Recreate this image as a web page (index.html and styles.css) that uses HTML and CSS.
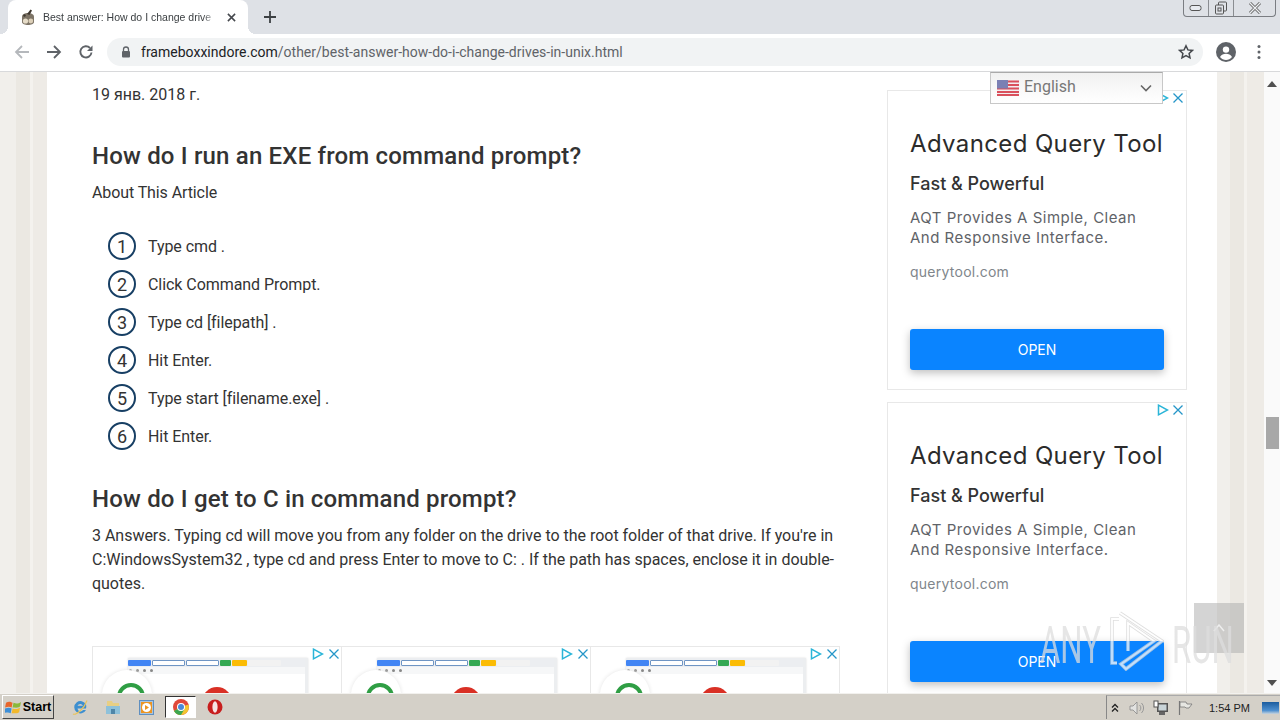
FILE: index.html
```html
<!DOCTYPE html>
<html lang="en">
<head>
<meta charset="utf-8">
<title>Best answer: How do I change drives in Unix?</title>
<link rel="stylesheet" href="styles.css">
</head>
<body>
<div class="screen">
  <header class="chrome">
    <div class="tabstrip">
      <div class="tab">
        <svg class="favicon" viewBox="0 0 14 16"><path d="M1 8c0-3 3-4 6-4s6 1 6 4v5c0 2-3 3-6 3s-6-1-6-3z" fill="#7d7466"/><circle cx="4.500" cy="12" r="2.600" fill="#e6dcc8"/><circle cx="9.800" cy="12" r="2.400" fill="#dccfb8"/><path d="M6 5 9.500.5l1.500 1L8.500 6z" fill="#3f3830"/><circle cx="3.500" cy="6.500" r="1.200" fill="#3f3830"/></svg>
        <span class="tab-title">Best answer: How do I change drive</span>
        <svg class="tab-close" viewBox="0 0 10 10"><path d="M1 1l8 8M9 1l-8 8" stroke="#45484d" stroke-width="1.700"/></svg>
      </div>
      <svg class="new-tab" viewBox="0 0 12 12"><path d="M6 0v12M0 6h12" stroke="#3c4043" stroke-width="1.800"/></svg>
      <div class="win-controls">
        <span class="win-btn win-min"><svg viewBox="0 0 14 8" width="14" height="8"><rect x="1" y="1.500" width="11" height="5" rx="2" fill="#e8ebf0" stroke="#555"/></svg></span>
        <span class="win-btn win-max"><svg viewBox="0 0 14 14" width="14" height="14"><rect x="4.500" y="1" width="8" height="9" rx="1" fill="#dee1e6" stroke="#555"/><rect x="1.500" y="4" width="8" height="9" rx="1" fill="#dee1e6" stroke="#555"/><rect x="4" y="7" width="3" height="3" fill="none" stroke="#555"/></svg></span>
        <span class="win-btn win-close"><svg viewBox="0 0 14 12" width="14" height="12"><path d="M2 1l10 10M12 1 2 11" stroke="#666" stroke-width="3"/><path d="M2 1l10 10M12 1 2 11" stroke="#eef0f3" stroke-width="1.200"/></svg></span>
      </div>
    </div>
    <div class="toolbar">
      <svg class="nav-icon" viewBox="0 0 16 16"><path d="M15 8H2M8 2 2 8l6 6" fill="none" stroke="#b5b8bc" stroke-width="1.800"/></svg>
      <svg class="nav-icon" viewBox="0 0 16 16"><path d="M1 8h13M8 2l6 6-6 6" fill="none" stroke="#5f6368" stroke-width="1.800"/></svg>
      <svg class="nav-icon" viewBox="0 0 16 16"><path d="M13.500 8.500A5.600 5.600 0 1 1 12 4" fill="none" stroke="#5f6368" stroke-width="1.900"/><path d="M14.500 1.500v5.500H9z" fill="#5f6368"/></svg>
      <div class="omnibox">
        <svg class="lock" viewBox="0 0 10 12"><path d="M2.500 5V3.500a2.500 2.500 0 0 1 5 0V5" fill="none" stroke="#5f6368" stroke-width="1.300"/><rect x="1" y="5" width="8" height="6.500" rx="1" fill="#5f6368"/></svg>
        <span class="url"><span class="url-host">frameboxxindore.com</span>/other/best-answer-how-do-i-change-drives-in-unix.html</span>
        <svg class="star" viewBox="0 0 16 16"><path d="M8 1.800l1.900 4.100 4.500.5-3.300 3 .9 4.400L8 11.600l-4 2.200.9-4.400-3.300-3 4.500-.5z" fill="none" stroke="#45484d" stroke-width="1.500"/></svg>
      </div>
      <svg class="avatar" viewBox="0 0 20 20"><circle cx="10" cy="10" r="10" fill="#5f6368"/><circle cx="10" cy="7.600" r="3.200" fill="#fff"/><path d="M4 15c1.200-2.400 3.600-3.200 6-3.200s4.800.8 6 3.200c-1.500 1.800-3.700 3-6 3s-4.500-1.200-6-3z" fill="#fff"/></svg>
      <svg class="menu-dots" viewBox="0 0 4 16"><circle cx="2" cy="2.500" r="1.500" fill="#5f6368"/><circle cx="2" cy="8" r="1.500" fill="#5f6368"/><circle cx="2" cy="13.500" r="1.500" fill="#5f6368"/></svg>
    </div>
  </header>

  <div class="viewport">
    <div class="page">
      <div class="stripes"></div>
      <div class="sheet">
        <main class="article">
          <p class="date">19 янв. 2018 г.</p>
          <h2 class="h-first">How do I run an EXE from command prompt?</h2>
          <p class="about">About This Article</p>
          <ol class="steps">
            <li class="step"><span class="num">1</span>Type cmd .</li>
            <li class="step"><span class="num">2</span>Click Command Prompt.</li>
            <li class="step"><span class="num">3</span>Type cd [filepath] .</li>
            <li class="step"><span class="num">4</span>Hit Enter.</li>
            <li class="step"><span class="num">5</span>Type start [filename.exe] .</li>
            <li class="step"><span class="num">6</span>Hit Enter.</li>
          </ol>
          <h2 class="h-second">How do I get to C in command prompt?</h2>
          <p class="answer">3 Answers. Typing cd will move you from any folder on the drive to the root folder of that drive. If you're in C:WindowsSystem32 , type cd and press Enter to move to C: . If the path has spaces, enclose it in double-quotes.</p>
          <div class="ad-row">
            <div class="thumb-ad"><div class="thumb-shot"><div class="thumb-tabs"><i class="t-blue"></i><i class="t-white"></i><i class="t-white"></i><i class="t-green"></i><i class="t-yellow"></i><i class="t-plain"></i></div><div class="thumb-tools"><i></i><i></i><i></i><i></i></div><span class="c-green"></span><span class="c-red"></span></div><svg class="ad-play" viewBox="0 0 12 12"><path d="M1.500 1.200 10.500 6l-9 4.800z" fill="none" stroke="#2bb5d8" stroke-width="1.500"/></svg><svg class="ad-x" viewBox="0 0 12 12"><path d="M1.500 1.500l9 9M10.500 1.500l-9 9" stroke="#2596c8" stroke-width="1.300"/></svg></div>
            <div class="thumb-ad"><div class="thumb-shot"><div class="thumb-tabs"><i class="t-blue"></i><i class="t-white"></i><i class="t-white"></i><i class="t-green"></i><i class="t-yellow"></i><i class="t-plain"></i></div><div class="thumb-tools"><i></i><i></i><i></i><i></i></div><span class="c-green"></span><span class="c-red"></span></div><svg class="ad-play" viewBox="0 0 12 12"><path d="M1.500 1.200 10.500 6l-9 4.800z" fill="none" stroke="#2bb5d8" stroke-width="1.500"/></svg><svg class="ad-x" viewBox="0 0 12 12"><path d="M1.500 1.500l9 9M10.500 1.500l-9 9" stroke="#2596c8" stroke-width="1.300"/></svg></div>
            <div class="thumb-ad"><div class="thumb-shot"><div class="thumb-tabs"><i class="t-blue"></i><i class="t-white"></i><i class="t-white"></i><i class="t-green"></i><i class="t-yellow"></i><i class="t-plain"></i></div><div class="thumb-tools"><i></i><i></i><i></i><i></i></div><span class="c-green"></span><span class="c-red"></span></div><svg class="ad-play" viewBox="0 0 12 12"><path d="M1.500 1.200 10.500 6l-9 4.800z" fill="none" stroke="#2bb5d8" stroke-width="1.500"/></svg><svg class="ad-x" viewBox="0 0 12 12"><path d="M1.500 1.500l9 9M10.500 1.500l-9 9" stroke="#2596c8" stroke-width="1.300"/></svg></div>
          </div>
        </main>
        <aside class="side">
          <section class="ad">
            <svg class="ad-play" viewBox="0 0 12 12"><path d="M1.500 1.200 10.500 6l-9 4.800z" fill="none" stroke="#2bb5d8" stroke-width="1.500"/></svg><svg class="ad-x" viewBox="0 0 12 12"><path d="M1.500 1.500l9 9M10.500 1.500l-9 9" stroke="#2596c8" stroke-width="1.300"/></svg>
            <h3 class="ad-title">Advanced Query Tool</h3>
            <p class="ad-sub">Fast &amp; Powerful</p>
            <p class="ad-desc">AQT Provides A Simple, Clean And Responsive Interface.</p>
            <p class="ad-url">querytool.com</p>
            <div class="ad-btn">OPEN</div>
          </section>
          <section class="ad">
            <svg class="ad-play" viewBox="0 0 12 12"><path d="M1.500 1.200 10.500 6l-9 4.800z" fill="none" stroke="#2bb5d8" stroke-width="1.500"/></svg><svg class="ad-x" viewBox="0 0 12 12"><path d="M1.500 1.500l9 9M10.500 1.500l-9 9" stroke="#2596c8" stroke-width="1.300"/></svg>
            <h3 class="ad-title">Advanced Query Tool</h3>
            <p class="ad-sub">Fast &amp; Powerful</p>
            <p class="ad-desc">AQT Provides A Simple, Clean And Responsive Interface.</p>
            <p class="ad-url">querytool.com</p>
            <div class="ad-btn">OPEN</div>
          </section>
        </aside>
      </div>
      <div class="stripes stripes-right"></div>
    </div>
    <div class="scrollbar">
      <svg class="sb-arrow" viewBox="0 0 10 6"><path d="M5 0l5 6H0z" fill="#505050"/></svg>
      <div class="sb-track"><div class="sb-thumb"></div></div>
      <svg class="sb-arrow" viewBox="0 0 10 6"><path d="M5 6l5-6H0z" fill="#505050"/></svg>
    </div>
    <div class="lang">
      <svg class="flag" viewBox="0 0 22 16"><rect width="22" height="16" fill="#f3eef0"/><path d="M0 1.500h22M0 5h22M0 8.500h22M0 12h22M0 15h22" stroke="#d9505c" stroke-width="1.800"/><rect width="11" height="8.500" fill="#7b80b4"/></svg>
      <span class="lang-name">English</span>
      <svg class="lang-caret" viewBox="0 0 12 8"><path d="M1 1.500l5 5 5-5" fill="none" stroke="#666" stroke-width="1.600"/></svg>
    </div>
    <div class="to-top"><svg class="to-top-icon" viewBox="0 0 12 8"><path d="M1 7l5-6 5 6" fill="none" stroke="#eee" stroke-width="1.500"/></svg></div>
    <div class="watermark">
      <span class="wm-text">ANY</span>
      <svg class="wm-logo" viewBox="0 0 54 60"><path d="M9 8H2v44h5M10 2l42 28-36 28-5-5 33-23-26-18v28" fill="none" stroke="#d4d4d4" stroke-width="3.500"/><path d="M9 8H2v44h5M10 2l42 28-36 28-5-5 33-23-26-18v28" fill="none" stroke="#fff" stroke-width="1.800"/></svg>
      <span class="wm-text">RUN</span>
    </div>
  </div>

  <footer class="taskbar">
    <button class="start"><svg class="start-logo" viewBox="0 0 18 16"><path d="M1 3c3-2 5-1 7 0l-1 5c-2-1-4-1-7 0z" fill="#e8662c"/><path d="M9 3c3 1 5 1 8-1l-1 5c-3 2-5 1-8 1z" fill="#8bb93a"/><path d="M0 9c3-1 5-1 7 0l-1 5c-2-1-4-1-7 0z" fill="#3d8fd8"/><path d="M8 9c3 1 5 1 8-1l-1 5c-3 2-5 1-8 1z" fill="#f2b92c"/></svg>Start</button>
    <div class="quick">
      <span class="app"><svg viewBox="0 0 18 18" width="18" height="18"><path d="M15 10.500H6.500a3 3 0 0 0 5.500 1.500h3a6.200 6.200 0 1 1 0-5.500c.4 1.300.3 2.800 0 4zM6.500 7.800h5.500a3 3 0 0 0-5.500 0z" fill="#3d8fd0"/><path d="M2 16c3 1.500 11-5 14-13.500" fill="none" stroke="#e9c35a" stroke-width="1.200"/></svg></span>
      <span class="app"><svg viewBox="0 0 16 16" width="16" height="16"><path d="M2 2h5l1 2h6v11H2z" fill="#e8cf84"/><path d="M1 7h14v8H1z" fill="#8ec1da"/><rect x="6" y="10" width="4" height="5" fill="#4f86a8"/></svg></span>
      <span class="app app-wmp"><svg viewBox="0 0 15 15" width="15" height="15"><rect x=".5" y=".5" width="14" height="14" fill="#a9c4de" stroke="#5f8fc0"/><rect x="2" y="2" width="11" height="11" fill="#ec9522"/><circle cx="7.500" cy="7.500" r="4.500" fill="#fff"/><path d="M6 5l4 2.500L6 10z" fill="#ec9522"/></svg></span>
      <span class="app app-active"><svg viewBox="0 0 16 16" width="16" height="16"><circle cx="8" cy="8" r="8" fill="#e0483a"/><path d="M8 8 1 12a8 8 0 0 0 7 4 8 8 0 0 0 7.500-10.500z" fill="#f4c531"/><path d="M8 8 1 12a8 8 0 0 0 7 4l3.500-6z" fill="#3da751"/><circle cx="8" cy="8" r="4" fill="#fff"/><circle cx="8" cy="8" r="3" fill="#4a88d8"/></svg></span>
      <span class="app"><svg viewBox="0 0 16 16" width="16" height="16"><circle cx="8" cy="8" r="7.500" fill="#c81e1e"/><ellipse cx="8" cy="8" rx="2.600" ry="5.800" fill="#f6e4e4"/></svg></span>
    </div>
    <div class="tray">
      <svg class="tray-up" viewBox="0 0 8 10"><path d="M1 4.500l3-3 3 3M1 8.500l3-3 3 3" fill="none" stroke="#222" stroke-width="1.300"/></svg>
      <svg class="tray-icon" viewBox="0 0 16 16"><path d="M1 6h3l4-4v12l-4-4H1z" fill="#e2e2e0" stroke="#888" stroke-width=".8"/><path d="M10.500 5a4 4 0 0 1 0 6M12.500 3a7 7 0 0 1 0 10" fill="none" stroke="#999"/></svg>
      <svg class="tray-icon" viewBox="0 0 16 16"><rect x="4" y="3" width="11" height="9" fill="#555"/><rect x="5.500" y="4.500" width="8" height="6" fill="#c9d4d8"/><path d="M6 12h6v3H6z" fill="#666"/><rect x="1" y="1" width="4" height="6" fill="#fff" stroke="#555"/></svg>
      <svg class="tray-icon" viewBox="0 0 16 16"><path d="M2.500 1v14" stroke="#777" stroke-width="1.200"/><path d="M3 2h6l1 2h5l-3 4H9L8 7H3z" fill="#e6e6e2" stroke="#777" stroke-width=".8"/></svg>
      <span class="clock">1:54 PM</span>
      <span class="show-desktop"></span>
    </div>
  </footer>
</div>
</body>
</html>
```
FILE: styles.css
```css
* { box-sizing: border-box; }
html, body { margin: 0; padding: 0; width: 1280px; height: 720px; overflow: hidden; }
body { font-family: Roboto, "Liberation Sans", sans-serif; color: #222; }
.screen { width: 1280px; height: 720px; display: flex; flex-direction: column; }

/* browser frame */
.chrome { flex: none; height: 72px; background: #fff; border-bottom: 1px solid #d8d9db; }
.tabstrip { height: 34px; background: #dee1e6; display: flex; align-items: flex-start; padding-left: 8px; }
.tab { width: 240px; height: 34px; background: #fff; border-radius: 8px 8px 0 0; display: flex; align-items: center; padding-left: 13px; font: 10.500px "Liberation Sans", sans-serif; color: #3c4043; position: relative; }
.tab::before, .tab::after { content: ""; position: absolute; bottom: 0; width: 8px; height: 8px; }
.tab::before { left: -8px; background: radial-gradient(circle at 0 0, transparent 8px, #fff 8px); }
.tab::after { right: -8px; background: radial-gradient(circle at 100% 0, transparent 8px, #fff 8px); }
.favicon { width: 14px; height: 16px; flex: none; }
.tab-title { width: 174px; margin-left: 8px; white-space: nowrap; overflow: hidden; -webkit-mask-image: linear-gradient(90deg, #000 92%, transparent); mask-image: linear-gradient(90deg, #000 92%, transparent); }
.tab-close { width: 9px; height: 9px; margin-left: 10px; flex: none; }
.new-tab { width: 12px; height: 12px; margin: 11px 0 0 16px; flex: none; }
.win-controls { margin-left: auto; margin-right: 4px; display: flex; height: 17px; border: 1px solid #7a7d82; border-top: 0; border-radius: 0 0 4px 4px; }
.win-btn { display: flex; align-items: center; justify-content: center; height: 16px; }
.win-min { width: 25px; border-right: 1px solid #8a8d91; }
.win-max { width: 25px; border-right: 1px solid #8a8d91; }
.win-close { width: 41px; }
.toolbar { height: 37px; display: flex; align-items: center; padding: 0 0 1px 14px; }
.nav-icon { width: 16px; height: 16px; margin-right: 16px; flex: none; }
.omnibox { width: 1096px; height: 28px; margin-left: -3px; background: #f1f3f4; border-radius: 14px; display: flex; align-items: center; padding-left: 14px; }
.lock { width: 10px; height: 12px; flex: none; }
.url { margin-left: 10px; font: 14px Roboto, sans-serif; color: #5f6368; white-space: nowrap; letter-spacing: .01px; }
.url-host { color: #202124; }
.star { width: 16px; height: 16px; margin-left: auto; margin-right: 9px; flex: none; }
.avatar { width: 20px; height: 20px; margin-left: 13px; flex: none; }
.menu-dots { width: 4px; height: 16px; margin-left: 21px; flex: none; }

/* page */
.viewport { flex: 1; min-height: 0; display: flex; position: relative; overflow: hidden; }
.page { flex: 1; min-width: 0; display: flex; background: #f2f0ec; }
.stripes { width: 47px; flex: none; background: linear-gradient(90deg, #f1efeb 0 16px, #ebe8e2 16px 30px, #f4f2ee 30px 33px, #eeebe6 33px 47px); }
.stripes-right { width: 47px; background: linear-gradient(90deg, #f1efeb 0 13px, #ebe8e2 13px 27px, #f4f2ee 27px 30px, #eeebe6 30px 47px); }
.sheet { width: 1170px; flex: none; background: #fff; display: flex; padding: 0 30px 0 45px; gap: 47px; overflow: hidden; }
.article { width: 748px; flex: none; }
.date { margin: 13px 0 0; font-size: 16px; line-height: 20px; color: #333; }
h2 { margin: 0; font-size: 24px; line-height: 30px; font-weight: 500; color: #333; letter-spacing: .18px; }
.h-first { margin-top: 36px; }
.about { margin: 10px 0 0; font-size: 16px; line-height: 24px; color: #333; letter-spacing: -.1px; }
.steps { list-style: none; margin: 22px 0 0; padding: 0 0 0 16px; }
.step { height: 38px; display: flex; align-items: center; font-size: 16px; color: #333; letter-spacing: -.06px; }
.num { width: 28px; height: 28px; margin-right: 12px; flex: none; display: flex; align-items: center; justify-content: center; border: 2.500px solid #173f64; border-radius: 50%; font-size: 18px; color: #333; }
.h-second { margin-top: 29px; }
.answer { margin: 10px 0 0; font-size: 16px; line-height: 24px; color: #333; letter-spacing: -.02px; }
.ad-row { margin-top: 50px; display: flex; height: 60px; border-top: 1px solid #e8e8e8; }
.thumb-ad { width: 249px; flex: none; position: relative; border-left: 1px solid #e8e8e8; overflow: hidden; }
.thumb-ad:last-child { border-right: 1px solid #e8e8e8; width: 250px; }
.thumb-shot { position: absolute; left: 35px; top: 11px; width: 180px; height: 60px; background: #fff; border-right: 3px solid #eceef0; box-shadow: 0 0 2px #ddd; }
.thumb-tabs { height: 9px; background: #eceef1; display: flex; align-items: center; gap: 1px; padding: 1px 0 0; }
.thumb-tabs i { display: block; height: 6px; border-radius: 1px; }
.t-blue { width: 23px; background: #4285f4; }
.t-white { width: 33px; background: #fff; border: 1px solid #6f95c4; }
.t-green { width: 11px; background: #34a853; }
.t-yellow { width: 15px; background: #fbbc05; }
.t-plain { width: 33px; background: #f2f2f2; }
.thumb-tools { display: flex; gap: 4px; padding: 2px 1px; background: #f6f7f8; }
.thumb-tools i { display: block; width: 3px; height: 3px; background: #888; border-radius: 50%; }
.c-green { position: absolute; left: -26px; top: 12px; width: 50px; height: 50px; border-radius: 50%; background: #fff; box-shadow: 0 0 4px #e4e4e4; }
.c-green::after { content: ""; position: absolute; left: 15px; top: 13px; width: 20px; height: 20px; border-radius: 50%; border: 4px solid #2f9e44; }
.c-red { position: absolute; left: 74px; top: 29px; width: 30px; height: 30px; border-radius: 50%; background: #d93025; }
.ad-play, .ad-x { position: absolute; top: 1px; width: 12px; height: 12px; }
.ad-play { right: 17px; }
.ad-x { right: 2px; }
.thumb-ad .ad-x { right: 1px; }

/* sidebar ads */
.side { width: 300px; flex: none; padding-top: 18px; display: flex; flex-direction: column; gap: 12px; }
.ad { height: 300px; flex: none; position: relative; background: #fff; border: 1px solid #e8e8e8; padding: 37px 22px 0; }
.ad-title { margin: 0; font: 400 24px/32px Inter, sans-serif; color: #2b2b2b; white-space: nowrap; letter-spacing: .37px; }
.ad-sub { margin: 12px 0 0; font: 500 18px/24px Inter, sans-serif; color: #333; }
.ad-desc { margin: 12px 0 0; font: 400 15px/20px Inter, sans-serif; color: #5f6368; letter-spacing: .5px; }
.ad-url { margin: 14px 0 0; font: 400 14px/20px Inter, sans-serif; color: #80868b; letter-spacing: .25px; }
.ad-btn { margin-top: 47px; height: 41px; background: #0a84ff; border-radius: 3px; color: #fff; display: flex; align-items: center; justify-content: center; font: 14px Inter, sans-serif; box-shadow: 0 3px 8px rgba(0, 0, 0, .25); }

/* scrollbar */
.scrollbar { width: 16px; flex: none; background: #fafafa; display: flex; flex-direction: column; align-items: center; padding: 9px 0 7px; }
.sb-arrow { width: 10px; height: 6px; flex: none; }
.sb-track { flex: 1; width: 100%; position: relative; }
.sb-thumb { margin: 330px auto 0; width: 13px; height: 32px; background: #a8a8a8; }

/* overlays */
.lang { position: absolute; left: 990px; top: 0; width: 173px; height: 32px; display: flex; align-items: center; padding-left: 6px; background: linear-gradient(#f1f1f1, #fff); border: 1px solid #c8c8c8; border-top-color: #aaa; }
.flag { width: 22px; height: 16px; flex: none; }
.lang-name { margin: -4px 0 0 5px; font: 16px Roboto, sans-serif; color: #777; }
.lang-caret { width: 12px; height: 8px; margin-left: auto; margin-right: 10px; }
.to-top { position: absolute; left: 1194px; top: 531px; width: 50px; height: 50px; background: rgba(170, 170, 170, .5); display: flex; justify-content: center; padding-top: 21px; }
.to-top-icon { width: 12px; height: 8px; }
.watermark { position: absolute; left: 1040px; top: 539px; height: 60px; display: flex; align-items: center; opacity: .75; pointer-events: none; }
.wm-text { font: 400 52px/60px Roboto, sans-serif; color: #dedede; width: 62px; transform: scaleX(.6); transform-origin: left center; white-space: nowrap; padding-top: 10px; }
.wm-logo { width: 54px; height: 60px; margin: 0 8px; flex: none; }

/* taskbar */
.taskbar { flex: none; height: 27px; background: #d4d0c8; border-top: 1px solid #f2f1ee; display: flex; align-items: center; }
.start { width: 52px; height: 24px; margin-left: 2px; padding: 0; display: flex; align-items: center; justify-content: center; gap: 1px; background: #d4d0c8; border: 1px solid; border-color: #fff #444 #444 #fff; font: 700 12.500px "Liberation Sans", sans-serif; color: #000; }
.start-logo { width: 17px; height: 15px; }
.quick { display: flex; align-items: center; margin-left: 9px; }
.app { width: 33px; height: 26px; display: flex; align-items: center; justify-content: center; }
.app-wmp { margin-left: 1px; }
.app-active { width: 31px; height: 22px; background: #fff; border: 1px solid; border-color: #333 #fff #fff #333; margin: 0 2px; }
.tray { margin-left: auto; height: 24px; width: 174px; display: flex; align-items: center; padding-left: 4px; border-left: 1px solid #888; border-top: 1px solid #aaa; }
.tray-up { width: 8px; height: 10px; margin-right: 10px; flex: none; }
.tray-icon { width: 16px; height: 16px; margin-right: 8px; flex: none; }
.clock { margin-left: 8px; font: 11px "Liberation Sans", sans-serif; color: #222; white-space: nowrap; }
.show-desktop { width: 17px; height: 12px; margin-left: 12px; background: linear-gradient(#1b5c9e, #4d8fcf 70%, #c8d4de); }
```
